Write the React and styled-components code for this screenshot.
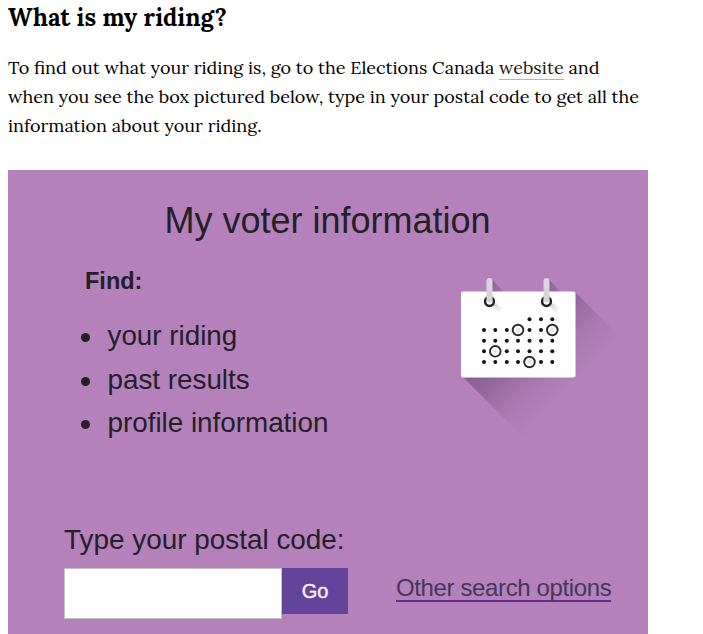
import React from 'react';
import styled, { createGlobalStyle } from 'styled-components';

const GlobalStyle = createGlobalStyle`
  * { box-sizing: border-box; }
  html, body { margin: 0; background: #fff; overflow: hidden; }
`;

const Page = styled.main`
  width: 703px;
  height: 634px;
  overflow: hidden;
  padding: 0 8px;
  color: #000;
  font-family: Lora, 'Liberation Serif', serif;
`;

const Heading = styled.h2`
  margin: 0;
  font-size: 24px;
  line-height: 36px;
  font-weight: 700;
  white-space: nowrap;
`;

const Intro = styled.p`
  margin: 17px 0 30px;
  font-size: 18px;
  line-height: 29px;
`;

const Line = styled.span`
  display: block;
  height: 29px;
  white-space: nowrap;
`;

const TextLink = styled.a`
  color: #1a1a1a;
  border-bottom: 1px solid #b4b4b4;
`;

const Card = styled.section`
  width: 640px;
  height: 464px;
  padding: 31px 0 0 56px;
  background: #b481ba;
  color: #222226;
  font-family: 'Liberation Sans', Arial, sans-serif;
`;

const CardTitle = styled.h3`
  margin: 0 0 25px 100.5px;
  font-size: 36px;
  line-height: 40px;
  font-weight: 400;
  white-space: nowrap;
`;

const Details = styled.div`
  display: flex;
  height: 178px;
`;

const FindBlock = styled.div`
  width: 391px;
  padding-left: 21px;
`;

const FindLabel = styled.strong`
  display: block;
  font-size: 23.5px;
  line-height: 30px;
`;

const List = styled.ul`
  list-style: none;
  margin: 18px 0 0;
  padding: 0;
`;

const Item = styled.li`
  display: flex;
  align-items: center;
  margin-left: -4px;
  gap: 17.5px;
  height: 43.5px;
  font-size: 27.8px;
  line-height: 43.5px;
  white-space: nowrap;

  &::before {
    content: '';
    width: 9px;
    height: 9px;
    margin-top: 4px;
    border-radius: 50%;
    background: #222226;
  }
`;

const CalendarIcon = styled.svg`
  flex: none;
  display: block;
  width: 180px;
  height: 180px;
`;

const FormLabel = styled.label`
  display: block;
  margin: 79px 0 11px;
  font-size: 27.9px;
  line-height: 34px;
  white-space: nowrap;
`;

const FormRow = styled.div`
  display: flex;
  align-items: flex-start;
`;

const PostalInput = styled.input`
  width: 218px;
  height: 51px;
  padding: 0 10px;
  border: 1px solid #c4c0c8;
  border-radius: 0;
  background: #fff;
  outline: none;
`;

const GoButton = styled.button`
  width: 66px;
  height: 46px;
  padding: 0;
  border: 0;
  background: #62449a;
  color: #f6f0fa;
  font: 20px/46px 'Liberation Sans', Arial, sans-serif;
  -webkit-text-stroke: 0.4px #f6f0fa;
`;

const OtherLink = styled.a`
  margin: 4px 0 0 48px;
  height: 30px;
  font-size: 24px;
  line-height: 31px;
  letter-spacing: -0.37px;
  color: #42395a;
  white-space: nowrap;
  border-bottom: 2px solid #642c91;
`;

const dotRows = [
  { y: 319.3, xs: [529.5, 541, 552.3] },
  { y: 330, xs: [484, 495.3, 506.8, 529.5, 541] },
  { y: 340.7, xs: [484, 495.3, 506.8, 518, 529.5, 541, 552.3] },
  { y: 351.3, xs: [484, 506.8, 518, 529.5, 541, 552.3] },
  { y: 362, xs: [484, 495.3, 506.8, 518, 541, 552.3] },
];

const circledDays = [[518, 330], [552.3, 330], [495.3, 351.3], [529.5, 362]];

function Calendar() {
  return (
    <CalendarIcon viewBox="455 266 180 180" aria-hidden="true">
      <defs>
        <linearGradient id="longShadow" gradientUnits="userSpaceOnUse" x1="500" y1="320" x2="578" y2="398">
          <stop offset="0" stopColor="#815a8b" stopOpacity="1" />
          <stop offset="0.35" stopColor="#8c6294" stopOpacity="0.85" />
          <stop offset="1" stopColor="#b481ba" stopOpacity="0" />
        </linearGradient>
        <linearGradient id="ringShadow" x1="0" y1="0" x2="1" y2="1">
          <stop offset="0" stopColor="#885e91" />
          <stop offset="1" stopColor="#a273a9" />
        </linearGradient>
        <linearGradient id="paperShadow" x1="0" y1="0" x2="1" y2="1">
          <stop offset="0" stopColor="#d2d2d2" />
          <stop offset="1" stopColor="#fff" />
        </linearGradient>
      </defs>
      <path d="M575 292 L635 352 L542 446 H532 L462 376 Z" fill="url(#longShadow)" />
      {[489.5, 546.5].map((x) => (
        <path key={x} d={`M${x + 2} 279 L${x + 14} 292 H${x + 1} Z`} fill="url(#ringShadow)" />
      ))}
      <rect x="461" y="291.5" width="114.5" height="86" rx="2" fill="#fff" />
      {[489.5, 546.5].map((x) => (
        <g key={x}>
          <path d={`M${x + 3} 306 L${x + 7} 303 L${x + 13} 309 L${x + 9} 313 Z`} fill="url(#paperShadow)" />
          <circle cx={x} cy="301.5" r="4.4" fill="#fff" stroke="#222" strokeWidth="2.5" />
          <path d={`M${x} 281 V299.5`} stroke="#d8d6d9" strokeWidth="6" strokeLinecap="round" />
        </g>
      ))}
      {dotRows.map((row) => row.xs.map((x) => (
        <circle key={`${x}-${row.y}`} cx={x} cy={row.y} r="2" fill="#151515" />
      )))}
      {circledDays.map(([x, y]) => (
        <g key={`${x}-${y}`}>
          <circle cx={x} cy={y} r="5.3" fill="#fff" stroke="#2b2b2b" strokeWidth="1.9" />
          <circle cx={x} cy={y} r="2.4" fill="#e6e6e6" />
        </g>
      ))}
    </CalendarIcon>
  );
}

export default function App() {
  return (
    <Page>
      <GlobalStyle />
      <Heading>What is my riding?</Heading>
      <Intro>
        <Line>
          To find out what your riding is, go to the Elections Canada <TextLink>website</TextLink> and
        </Line>
        <Line>when you see the box pictured below, type in your postal code to get all the</Line>
        <Line>information about your riding.</Line>
      </Intro>
      <Card>
        <CardTitle>My voter information</CardTitle>
        <Details>
          <FindBlock>
            <FindLabel>Find:</FindLabel>
            <List>
              <Item>your riding</Item>
              <Item>past results</Item>
              <Item>profile information</Item>
            </List>
          </FindBlock>
          <Calendar />
        </Details>
        <FormLabel htmlFor="postal">Type your postal code:</FormLabel>
        <FormRow>
          <PostalInput id="postal" />
          <GoButton type="button">Go</GoButton>
          <OtherLink>Other search options</OtherLink>
        </FormRow>
      </Card>
    </Page>
  );
}
